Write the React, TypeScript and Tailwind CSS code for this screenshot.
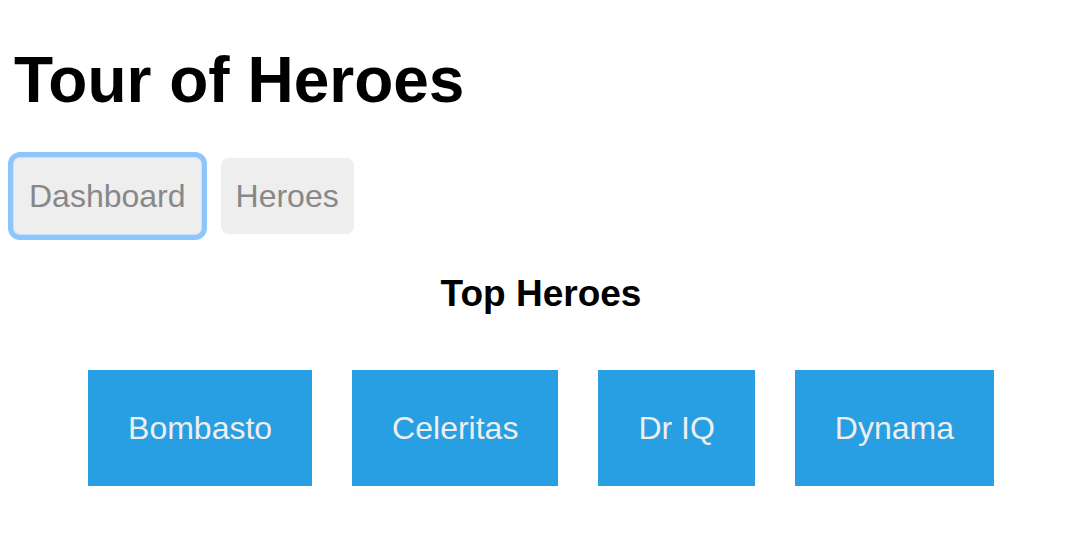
import React from 'react';

const heroes = ['Bombasto', 'Celeritas', 'Dr IQ', 'Dynama'];

export default function App() {
  return (
    <div className="min-h-[536px] w-full bg-white px-[14px] pt-[43px] font-['Liberation_Sans',Arial,sans-serif]">
      <h1 className="mb-[41px] text-[64px] font-bold leading-[74px] text-black">
        Tour of Heroes
      </h1>

      <nav className="flex gap-[20px]">
        <a className="flex h-[76px] items-center rounded-[6px] bg-[#eeeeee] px-[15px] text-[32px] text-[#888888] shadow-[0_0_0_1px_#c9e2fc,0_0_0_6px_#8ec5fb]">
          Dashboard
        </a>
        <a className="flex h-[76px] items-center rounded-[8px] bg-[#eeeeee] px-[15px] text-[32px] text-[#888888]">
          Heroes
        </a>
      </nav>

      <h3 className="mt-[39px] text-center text-[37px] font-bold leading-[42px] text-black">
        Top Heroes
      </h3>

      <div className="mt-[55px] -mx-[14px] flex justify-center gap-[40px]">
        {heroes.map(h => (
          <div
            key={h}
            className="flex h-[116px] items-center bg-[#279fe2] px-[40px] text-[32px] text-[#eeeeee]"
          >
            {h}
          </div>
        ))}
      </div>
    </div>
  );
}
